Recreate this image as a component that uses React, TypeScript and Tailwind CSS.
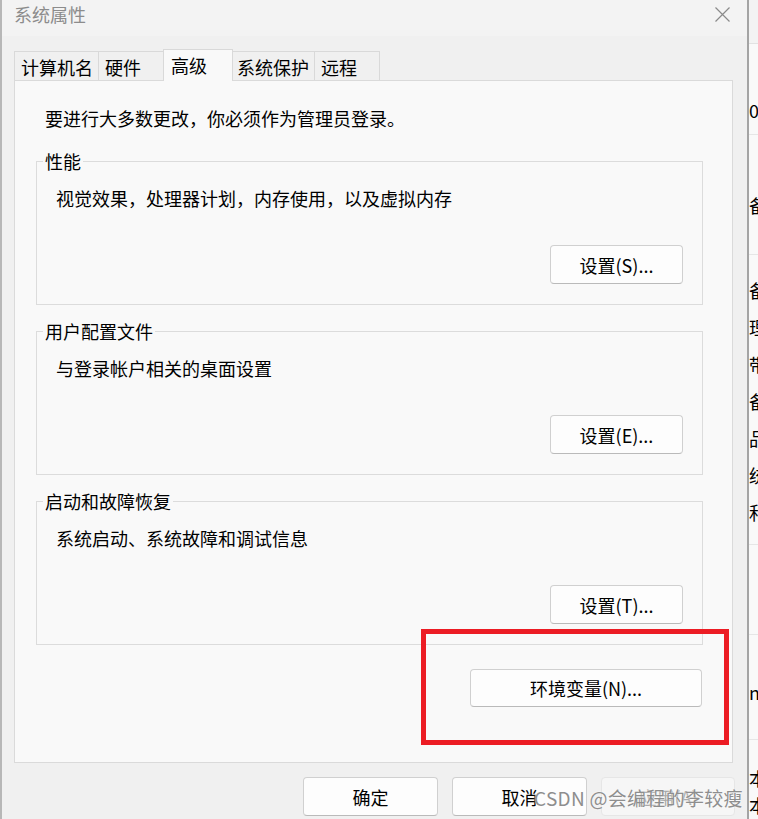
import React from "react";

const FONT = "font-['Noto_Sans_CJK_SC','Noto_Sans',sans-serif]";

function Btn({
  className,
  children,
}: {
  className: string;
  children: React.ReactNode;
}) {
  return (
    <button
      className={`flex items-center justify-center rounded-[4px] border border-[#d0d0d0] border-b-[#bababa] bg-[#fdfdfd] text-[18px] leading-[24px] text-black ${className}`}
    >
      {children}
    </button>
  );
}

function Group({
  title,
  desc,
  btn,
  className,
}: {
  title: string;
  desc: string;
  btn: string;
  className: string;
}) {
  return (
    <fieldset
      className={`m-0 w-[667px] border border-[#dcdcdc] p-0 pb-[20px] ${className}`}
    >
      <legend className="ml-[6px] px-[2px] text-[18px] leading-[24px]">
        {title}
      </legend>
      <div className="mt-[13px] pl-[19px] text-[18px] leading-[24px]">
        {desc}
      </div>
      <div className="mt-[35px] flex justify-end pr-[19px]">
        <Btn className="h-[39px] w-[133px]">{btn}</Btn>
      </div>
    </fieldset>
  );
}

function Tab({
  label,
  className,
}: {
  label: string;
  className: string;
}) {
  return (
    <div
      className={`shrink-0 border-l border-t border-[#d9d9d9] text-[18px] leading-[24px] ${className}`}
    >
      {label}
    </div>
  );
}

export default function App() {
  return (
    <div
      className={`relative flex h-[819px] w-[758px] overflow-hidden bg-[#f0f0f0] text-black ${FONT}`}
    >
      {/* window behind, left edge */}
      <div className="w-[2px] shrink-0 bg-[#b7b7b7]" />

      {/* dialog */}
      <div className="flex w-[745px] shrink-0 flex-col bg-[#f0f0f0]">
        {/* title bar */}
        <div className="flex h-[36px] shrink-0 items-start justify-between bg-[#f3f3f3] pl-[12px] pr-[17px]">
          <span className="mt-[2px] text-[18px] leading-[24px] text-[#8c8c8c]">
            系统属性
          </span>
          <svg
            className="mt-[7px]"
            width="15"
            height="15"
            viewBox="0 0 15 15"
            fill="none"
            stroke="#8a8a8a"
            strokeWidth="1.2"
          >
            <path d="M0.5 0.5 L14.5 14.5 M14.5 0.5 L0.5 14.5" />
          </svg>
        </div>

        {/* body */}
        <div className="flex flex-1 flex-col pl-[12px] pr-[14px] pt-[13px]">
          {/* tabs */}
          <div className="flex h-[31px] items-end">
            <Tab label="计算机名" className="h-[29px] w-[84px] pl-[6px] pt-[3px]" />
            <Tab label="硬件" className="h-[29px] w-[65px] pl-[6px] pt-[3px]" />
            <Tab
              label="高级"
              className="relative z-10 -mb-px -mr-px h-[32px] w-[70px] border-r bg-[#f9f9f9] pl-[7px] pt-[3px]"
            />
            <Tab label="系统保护" className="h-[29px] w-[82px] pl-[4px] pt-[3px]" />
            <Tab label="远程" className="h-[29px] w-[66px] border-r pl-[6px] pt-[3px]" />
          </div>

          {/* panel */}
          <div className="flex h-[683px] w-[719px] flex-col border border-[#dadada] bg-[#f9f9f9] pl-[21px] pt-[25px]">
            <div className="pl-[9px] text-[18px] leading-[24px]">
              要进行大多数更改，你必须作为管理员登录。
            </div>
            <Group
              className="mt-[19px]"
              title="性能"
              desc="视觉效果，处理器计划，内存使用，以及虚拟内存"
              btn="设置(S)..."
            />
            <Group
              className="mt-[14px]"
              title="用户配置文件"
              desc="与登录帐户相关的桌面设置"
              btn="设置(E)..."
            />
            <Group
              className="mt-[14px]"
              title="启动和故障恢复"
              desc="系统启动、系统故障和调试信息"
              btn="设置(T)..."
            />
            <div className="mt-[24px] flex w-[667px] justify-end pr-[1px]">
              <Btn className="h-[38px] w-[232px]">环境变量(N)...</Btn>
            </div>
          </div>

          {/* bottom buttons */}
          <div className="-mr-[2px] mt-[14px] flex justify-end gap-[14px]">
            <Btn className="h-[39px] w-[135px]">确定</Btn>
            <Btn className="h-[39px] w-[135px]">取消</Btn>
            <button className="flex h-[39px] w-[134px] items-center justify-center rounded-[4px] border border-[#e6e6e6] bg-[#f6f6f6] text-[18px] leading-[24px] text-[#a8a8a8]">
              应用(A)
            </button>
          </div>
        </div>
      </div>

      {/* dialog edge shadow */}
      <div className="w-[2px] shrink-0 bg-[#a4a4a4]" />

      {/* window behind, right edge */}
      <div className="flex w-[9px] shrink-0 flex-col overflow-hidden bg-[#f9f9f9] text-[18px] leading-[24px]">
        <div className="h-[44px] shrink-0 border-b border-[#e2e2e2] bg-[#f3f3f3]" />
        <div className="h-[91px] shrink-0 border-b border-[#e6e6e6] pt-[54px]">
          <div className="whitespace-nowrap">00</div>
        </div>
        <div className="h-[120px] shrink-0 border-b border-[#e6e6e6] pt-[58px]">
          <div className="whitespace-nowrap">备</div>
        </div>
        <div className="h-[290px] shrink-0 border-b border-[#e6e6e6] pt-[17px]">
          <div className="whitespace-nowrap leading-[37px]">备</div>
          <div className="whitespace-nowrap leading-[37px]">理</div>
          <div className="whitespace-nowrap leading-[37px]">带</div>
          <div className="whitespace-nowrap leading-[37px]">备</div>
          <div className="whitespace-nowrap leading-[37px]">品</div>
          <div className="whitespace-nowrap leading-[37px]">统</div>
          <div className="whitespace-nowrap leading-[37px]">和</div>
        </div>
        <div className="h-[90px] shrink-0 border-b border-[#e6e6e6]" />
        <div className="h-[105px] shrink-0 border-b border-[#e6e6e6] pt-[45px]">
          <div className="whitespace-nowrap">n</div>
        </div>
        <div className="shrink-0 pt-[25px]">
          <div className="whitespace-nowrap leading-[27px]">本</div>
          <div className="whitespace-nowrap leading-[27px]">本</div>
        </div>
      </div>

      {/* red annotation rectangle */}
      <div className="pointer-events-none absolute left-[421px] top-[629px] h-[116px] w-[308px] border-[5px] border-[#ec1c24]" />

      {/* watermark */}
      <div className="pointer-events-none absolute left-[534px] top-[785px] whitespace-nowrap text-[19px] leading-[26px] tracking-[0.3px] text-[#8e8e8e] [text-shadow:0_0_2px_#ffffff]">
        CSDN @会编程的李较瘦
      </div>
    </div>
  );
}
